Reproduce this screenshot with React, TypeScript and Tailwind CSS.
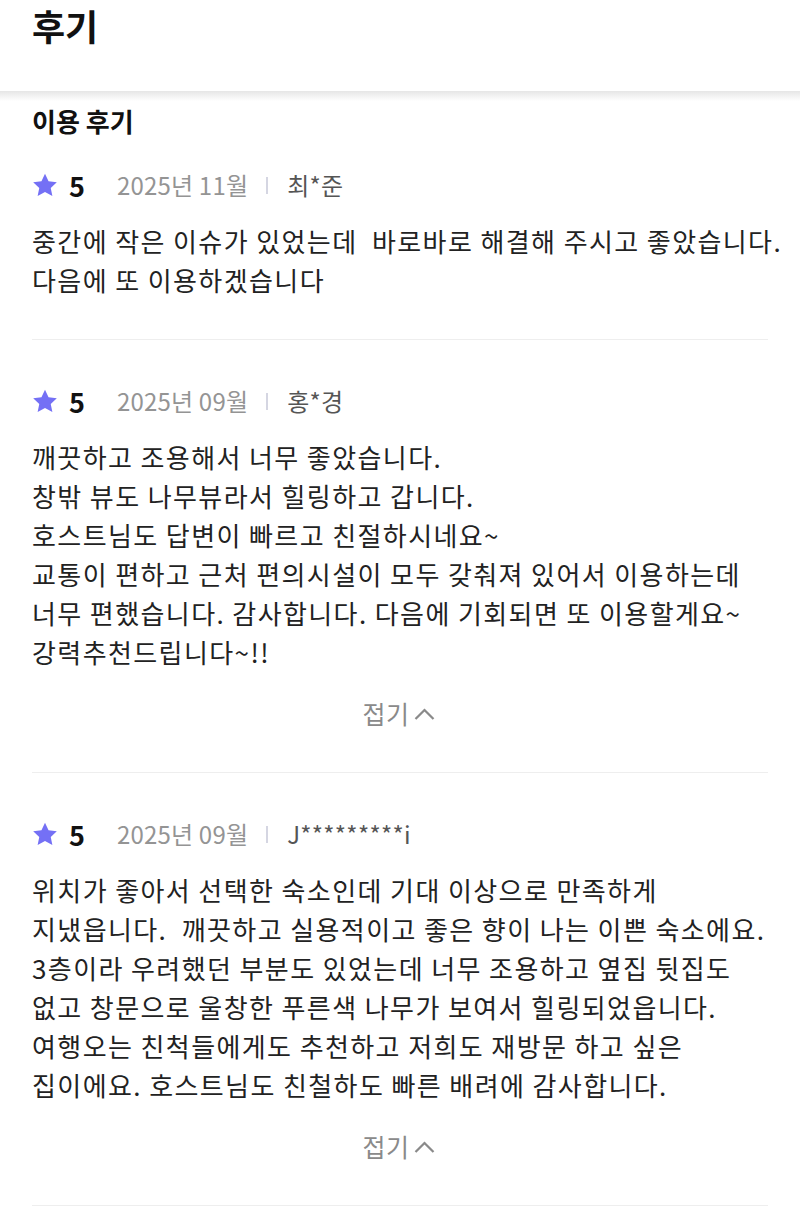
import React from 'react';

type Review = {
  date: string;
  name: string;
  lines: string[];
  collapsible?: boolean;
};

const reviews: Review[] = [
  {
    date: '2025년 11월',
    name: '최*준',
    lines: ['중간에 작은 이슈가 있었는데  바로바로 해결해 주시고 좋았습니다.', '다음에 또 이용하겠습니다'],
  },
  {
    date: '2025년 09월',
    name: '홍*경',
    lines: [
      '깨끗하고 조용해서 너무 좋았습니다.',
      '창밖 뷰도 나무뷰라서 힐링하고 갑니다.',
      '호스트님도 답변이 빠르고 친절하시네요~',
      '교통이 편하고 근처 편의시설이 모두 갖춰져 있어서 이용하는데',
      '너무 편했습니다. 감사합니다. 다음에 기회되면 또 이용할게요~',
      '강력추천드립니다~!!',
    ],
    collapsible: true,
  },
  {
    date: '2025년 09월',
    name: 'J*********i',
    lines: [
      '위치가 좋아서 선택한 숙소인데 기대 이상으로 만족하게',
      '지냈읍니다.  깨끗하고 실용적이고 좋은 향이 나는 이쁜 숙소에요.',
      '3층이라 우려했던 부분도 있었는데 너무 조용하고 옆집 뒷집도',
      '없고 창문으로 울창한 푸른색 나무가 보여서 힐링되었읍니다.',
      '여행오는 친척들에게도 추천하고 저희도 재방문 하고 싶은',
      '집이에요. 호스트님도 친철하도 빠른 배려에 감사합니다.',
    ],
    collapsible: true,
  },
];

const Star = () => (
  <svg width="28" height="27" viewBox="0 0 24 24" className="shrink-0 -ml-[1px]">
    <path
      d="M12 1.5l3.15 6.7 7.35.9-5.4 5.05 1.45 7.25L12 17.85l-6.55 3.55L6.9 14.15 1.5 9.1l7.35-.9L12 1.5z"
      fill="#7470f5"
    />
  </svg>
);

const ReviewItem = ({ review, first }: { review: Review; first?: boolean }) => (
  <div className={`${first ? 'pt-[32px]' : 'pt-[46px]'} pb-[40px] border-b border-[#eeeeee]`}>
    <div className="flex items-center h-[30px]">
      <Star />
      <span className="ml-[10px] text-[27px] font-bold text-[#111] leading-none">5</span>
      <span className="ml-[32px] text-[24px] text-[#949494] leading-none tracking-[0.2px]">{review.date}</span>
      <span className="ml-[18px] w-[2px] h-[17px] bg-[#d5d6e2]" />
      <span className="ml-[19px] text-[24px] text-[#555] leading-none tracking-[0.3px]">{review.name}</span>
    </div>
    <div className="mt-[21px] text-[26px] leading-[39px] text-[#222] whitespace-pre tracking-[1.4px]">
      {review.lines.map((l, i) => (
        <div key={i}>{l}</div>
      ))}
    </div>
    {review.collapsible && (
      <div className="mt-[25px] flex items-center justify-center h-[36px] text-[25px] text-[#8a8a8a]">
        <span className="tracking-[0.5px]">접기</span>
        <svg width="27" height="27" viewBox="0 0 24 24" className="ml-[1px]">
          <path d="M4 16l8-8 8 8" fill="none" stroke="#8a8a8a" strokeWidth="2" />
        </svg>
      </div>
    )}
  </div>
);

export default function App() {
  return (
    <div
      className="w-[800px] min-h-[1230px] bg-white overflow-hidden"
      style={{ fontFamily: '"Noto Sans CJK KR", "Noto Sans", sans-serif' }}
    >
      <div className="h-[91px] px-[32px]">
        <h1 className="text-[36px] font-bold text-[#111] leading-[50px]">후기</h1>
      </div>
      <div className="h-[10px] bg-gradient-to-b from-[#e6e6e6] to-white" />
      <div className="px-[32px]">
        <h2 className="mt-[3px] text-[26px] font-semibold text-[#111] leading-[34px]">이용 후기</h2>
        <div>
          {reviews.map((r, i) => (
            <ReviewItem key={i} review={r} first={i === 0} />
          ))}
        </div>
      </div>
    </div>
  );
}
